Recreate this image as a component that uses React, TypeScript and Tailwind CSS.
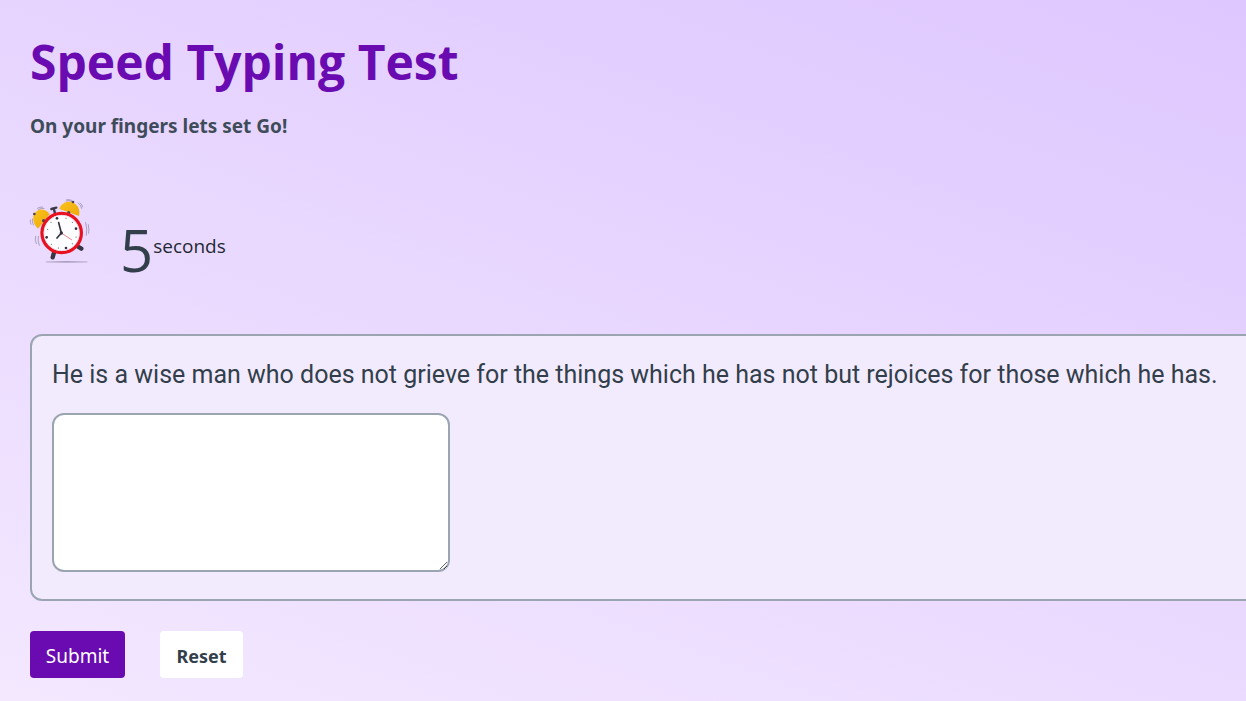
import { useState } from "react";

function AlarmClock() {
  return (
    <svg viewBox="0 0 240 240" className="h-20 w-20 shrink-0" role="img" aria-label="Alarm clock">
      <defs>
        <linearGradient id="bell" x1="0" y1="0" x2="1" y2="1">
          <stop offset="0" stopColor="#fbc21c" />
          <stop offset="1" stopColor="#eda80b" />
        </linearGradient>
        <linearGradient id="floor" x1="0" x2="1">
          <stop offset="0" stopColor="#8f86a8" stopOpacity="0.3" />
          <stop offset="0.5" stopColor="#8f86a8" stopOpacity="0.7" />
          <stop offset="1" stopColor="#8f86a8" stopOpacity="0.3" />
        </linearGradient>
      </defs>
      <rect x="77" y="213" width="126" height="5" rx="2" fill="url(#floor)" />
      <g fill="none" stroke="#8a829e" strokeWidth="2" strokeLinecap="round">
        <path d="M55 59q8-6 17-4M52 55q8-5 16-4M37 87q-2 9 3 18M31 90q-2 7 2 13" />
        <path d="M138 33q9-3 17 1M140 29q8-1 15 2M174 38q9 7 11 17M181 39q6 5 7 12" />
        <path d="M55 139q-3 14 3 27M47 139q-4 12 2 22M197 98q6 20 2 38M205 104q3 14 1 26" />
      </g>
      <path d="M105 70 101 55M94 57 109 53" stroke="#3a3a49" strokeWidth="7" strokeLinecap="round" />
      <path d="M103 184 98 202M171 168 184 176" stroke="#363645" strokeWidth="13" strokeLinecap="round" />
      <path d="M54 116C34 98 36 70 52 62c12-7 30-2 37 11Z" fill="url(#bell)" />
      <path d="M118 57c5-17 22-25 38-20 17 5 26 22 21 41Z" fill="url(#bell)" />
      <circle cx="43" cy="72" r="4" fill="#4a4551" />
      <circle cx="159" cy="36" r="4" fill="#4a4551" />
      <circle cx="71" cy="92" r="5" fill="#4a4551" />
      <circle cx="146" cy="68" r="5" fill="#4a4551" />
      <circle cx="125" cy="129" r="59" fill="#fdfcff" stroke="#e9101f" strokeWidth="10" />
      <circle cx="125" cy="129" r="53" fill="none" stroke="#d9d3df" strokeWidth="2" />
      <g fill="#35343f">
        <circle cx="111" cy="85" r="4" />
        <circle cx="168" cy="116" r="4" />
        <circle cx="138" cy="174" r="4" />
        <circle cx="80" cy="142" r="4" />
        <circle cx="138" cy="85" r="1.5" />
        <circle cx="157" cy="97" r="1.5" />
        <circle cx="168" cy="141" r="1.5" />
        <circle cx="157" cy="161" r="1.5" />
        <circle cx="115" cy="174" r="1.5" />
        <circle cx="94" cy="163" r="1.5" />
        <circle cx="83" cy="118" r="1.5" />
        <circle cx="93" cy="97" r="1.5" />
      </g>
      <path d="M124 129 156 150" stroke="#e84553" strokeWidth="2" />
      <path d="M124 129 116 98M124 129 111 144" stroke="#33323e" strokeWidth="5" strokeLinecap="round" />
      <circle cx="124" cy="129" r="5" fill="#33323e" />
    </svg>
  );
}

export default function App() {
  const [typed, setTyped] = useState("");

  return (
    <main className="flex min-h-screen flex-col overflow-hidden bg-[linear-gradient(200deg,#dec7ff_0%,#f3e8ff_100%)] pt-8 pb-5 pl-[30px] font-['Noto_Sans',sans-serif] text-[#323f4b]">
      <h1 className="font-['Open_Sans',sans-serif] text-5xl leading-[60px] font-bold text-[#690bb0]">Speed Typing Test</h1>
      <p className="mt-5 text-[19px] leading-7 font-bold text-[#3e4c59]">On your fingers lets set Go!</p>
      <div className="mt-[50px] -ml-[10px] flex items-start">
        <AlarmClock />
        <p className="mt-5 ml-5 flex items-center font-['Open_Sans',sans-serif]">
          <span className="text-[58px] leading-[80px]">5</span>
          <span className="-mt-2 text-[19px] leading-7 text-[#1f2933]">seconds</span>
        </p>
      </div>
      <section className="mt-11 -mr-5 rounded-xl border-2 border-[#9aa5b1] bg-[#f2ebfe] px-5 pt-5 pb-[27px]">
        <label htmlFor="typing" className="block font-[Roboto,sans-serif] text-[25px] leading-[38px] whitespace-nowrap">
          He is a wise man who does not grieve for the things which he has not but rejoices for those which he has.
        </label>
        <textarea
          id="typing"
          value={typed}
          onChange={(event) => setTyped(event.target.value)}
          className="mt-[19px] block h-[159px] w-[398px] rounded-xl border-2 border-[#9aa5b1] bg-white p-3 text-lg outline-none"
        />
      </section>
      <div className="mt-[30px] flex gap-[35px]">
        <button type="button" className="h-[47px] w-[95px] rounded bg-[#690bb0] pt-[3px] text-[19px] text-white">
          Submit
        </button>
        <button
          type="button"
          onClick={() => setTyped("")}
          className="h-[47px] w-[83px] rounded bg-white pt-[3px] text-lg font-bold"
        >
          Reset
        </button>
      </div>
    </main>
  );
}
